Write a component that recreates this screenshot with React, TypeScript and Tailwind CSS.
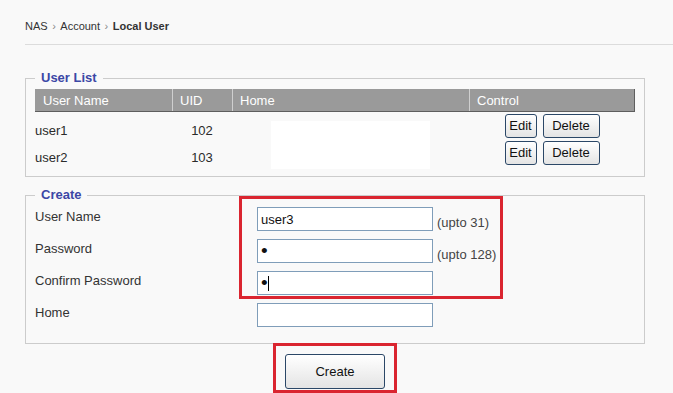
const users = [
  { name: "user1", uid: 102 },
  { name: "user2", uid: 103 },
];

const fields = [
  { label: "User Name", value: "user3", type: "text", note: "(upto 31)" },
  { label: "Password", value: "x", type: "password", note: "(upto 128)" },
  { label: "Confirm Password", value: "x", type: "password", caret: true },
  { label: "Home", value: "", type: "text" },
];

function SmallButton({ label, width }: { label: string; width: string }) {
  return (
    <button
      className={`${width} h-[24px] border border-[#2b4767] rounded-[3px] bg-linear-to-b from-white to-[#e4e4e4] text-[13px] leading-[16px] text-[#111]`}
    >
      {label}
    </button>
  );
}

export default function App() {
  return (
    <div className="relative h-[393px] overflow-hidden bg-[#f9f9f9] pl-[25px] pt-[19px] font-['Liberation_Sans',Arial,sans-serif] text-[#2b2b2b]">
      {/* breadcrumb */}
      <div className="text-[11px] leading-[14px] text-[#333]">
        NAS<span className="px-[4.5px] text-[#888]">›</span>Account
        <span className="px-[4.5px] text-[#888]">›</span>
        <span className="font-bold">Local User</span>
      </div>
      <div className="mt-[11px] border-t border-[#dcdcdc]" />

      {/* user list */}
      <fieldset className="mt-[25px] w-[620px] border border-[#cccccc] px-[9px] pb-[7px]">
        <legend className="px-[6px] text-[13px] font-bold leading-[16px] text-[#3b47a6]">User List</legend>
        <div className="mt-[3px] grid h-[23px] grid-cols-[137px_60px_237px_1fr] border-r border-b border-[#5e5e5e] bg-[#9a9a9a] text-[13px] leading-[16px] text-white">
          <div className="pl-[8px] pt-[4px]">User Name</div>
          <div className="border-l border-[#cfcfcf] pl-[7px] pt-[4px]">UID</div>
          <div className="border-l border-[#cfcfcf] pl-[7px] pt-[4px]">Home</div>
          <div className="border-l border-[#cfcfcf] pl-[7px] pt-[4px]">Control</div>
        </div>
        <div className="grid grid-cols-[137px_60px_237px_1fr] grid-rows-[27px_30px] text-[13px] leading-[16px]">
          {users.map((u, i) => (
            <div key={u.name} className="contents">
              <div className="pt-[11px]">{u.name}</div>
              <div className="pt-[11px] text-center">{u.uid}</div>
              {i === 0 && (
                <div className="row-span-2 flex justify-center">
                  <div className="mt-[9px] h-[48px] w-[159px] bg-white" />
                </div>
              )}
              <div className="flex justify-center gap-[6px] pt-[2px]">
                <SmallButton label="Edit" width="w-[32px]" />
                <SmallButton label="Delete" width="w-[57px]" />
              </div>
            </div>
          ))}
        </div>
      </fieldset>

      {/* create */}
      <fieldset className="mt-[10px] w-[620px] border border-[#cccccc] px-[9px] pb-[16px]">
        <legend className="px-[6px] text-[13px] font-bold leading-[16px] text-[#3b47a6]">Create</legend>
        <div className="mt-[4px] flex flex-col gap-[8px] text-[13px] leading-[16px]">
          {fields.map((f) => (
            <div key={f.label} className="flex items-start">
              <label className="w-[222px] pt-[2px] text-[#333]">{f.label}</label>
              <div className="relative">
                <input
                  type={f.type}
                  defaultValue={f.value}
                  readOnly
                  className={`h-[24px] w-[176px] border border-[#7f9db9] bg-white pl-[3px] text-[#111] outline-none ${
                    f.type === "password" ? "text-[19px]" : "text-[13px]"
                  }`}
                />
                {f.caret && <span className="absolute left-[11px] top-[5px] h-[15px] w-px bg-black" />}
              </div>
              {f.note && <span className="ml-[4px] pt-[8px] text-[#444]">{f.note}</span>}
            </div>
          ))}
        </div>
      </fieldset>

      <div className="mt-[10px] flex w-[620px] justify-center">
        <button className="h-[35px] w-[100px] rounded-[3px] border border-[#2b4767] bg-linear-to-b from-white to-[#e4e4e4] text-[13px] text-[#111]">
          Create
        </button>
      </div>

      {/* annotation boxes */}
      <div className="absolute left-[239px] top-[196px] h-[103px] w-[264px] border-[3px] border-[#da2530]" />
      <div className="absolute left-[273px] top-[343px] h-[50px] w-[124px] border-[3px] border-[#da2530]" />
    </div>
  );
}
